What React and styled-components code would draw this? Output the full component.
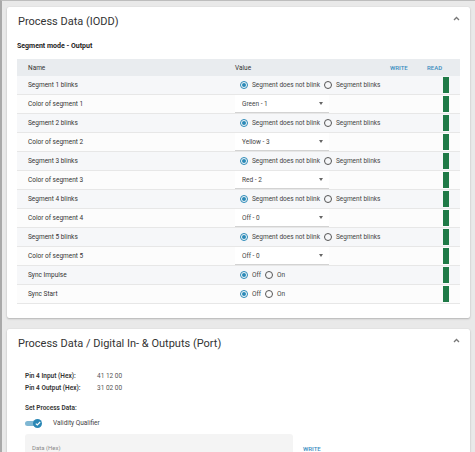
import React from 'react';
import styled, { createGlobalStyle } from 'styled-components';

const GlobalStyle = createGlobalStyle`
  html, body {
    margin: 0;
    padding: 0;
  }
  body {
    background: #e9e9e9;
    font-family: Roboto, "Liberation Sans", sans-serif;
    color: #333;
  }
`;

const Page = styled.div`
  height: 452px;
  overflow: hidden;
  box-sizing: border-box;
  border-left: 2px solid #a9a9a9;
  border-top: 1px solid #bdbdbd;
  padding: 6px 5px 0 5px;
  display: flex;
  flex-direction: column;
  gap: 11px;
`;

const Card = styled.section`
  flex-shrink: 0;
  background: #fff;
  border-radius: 2px;
  box-shadow: 0 1px 2px rgba(0, 0, 0, 0.22), 0 0 1px rgba(0, 0, 0, 0.12);
  padding: 0 10px 14px;
`;

const CardHeader = styled.header`
  height: 28px;
  display: flex;
  align-items: center;
  justify-content: space-between;
  padding-left: 1px;
`;

const Title = styled.h2`
  margin: 0;
  font-size: 11px;
  font-weight: 400;
  color: #333;
`;

const Collapse = styled.svg`
  align-self: flex-start;
  margin-top: 9px;
`;

const SectionTitle = styled.div`
  font-size: 7px;
  font-weight: 700;
  line-height: 10px;
  margin: 6px 0 8px;
  color: #222;
`;

const Row = styled.div`
  display: grid;
  grid-template-columns: 218px minmax(0, 1fr) 37px 41px;
  align-items: center;
  height: ${p => (p.$header ? '17px' : '19px')};
  box-sizing: border-box;
  background: ${p => (p.$header ? '#e9ecef' : p.$shade ? '#f6f7f9' : '#fcfcfc')};
  border-bottom: ${p => (p.$header ? 'none' : '1px solid #e7e7e7')};
  font-size: 6.5px;
  color: #333;
`;

const NameCell = styled.div`
  padding-left: 11px;
  white-space: nowrap;
`;

const ValueCell = styled.div`
  display: flex;
  align-items: center;
  height: 100%;
  white-space: nowrap;
  padding-left: ${p => (p.$pad ? '5px' : '0')};
`;

const ActionHead = styled.div`
  padding-left: 8px;
  font-size: 6px;
  font-weight: 500;
  color: #3a8dbf;
`;

const BarCell = styled.div`
  padding-left: 24px;
  display: flex;
  align-items: center;
`;

const Bar = styled.div`
  width: 6px;
  height: 16px;
  background: #1f7a47;
`;

const RadioLabel = styled.label`
  display: inline-flex;
  align-items: center;
  gap: 4px;
  margin-right: 4px;
  white-space: nowrap;
  color: #444;
`;

const RadioCircle = styled.span`
  flex-shrink: 0;
  width: 8px;
  height: 8px;
  box-sizing: border-box;
  border-radius: 50%;
  border: 1px solid ${p => (p.$on ? '#2a8ab8' : '#555')};
  display: inline-flex;
  align-items: center;
  justify-content: center;
  &::after {
    content: '';
    width: 4px;
    height: 4px;
    border-radius: 50%;
    background: ${p => (p.$on ? '#2a8ab8' : 'transparent')};
  }
`;

const Select = styled.div`
  width: 94px;
  height: 18px;
  box-sizing: border-box;
  display: flex;
  align-items: center;
  justify-content: space-between;
  padding: 0 6px 0 7px;
  background: #fff;
  border-bottom: 1px solid #d3d3d3;
  color: #444;
`;

const Caret = styled.span`
  width: 0;
  height: 0;
  border-left: 2.5px solid transparent;
  border-right: 2.5px solid transparent;
  border-top: 3px solid #666;
`;

const InfoBlock = styled.div`
  padding-left: 8px;
  margin-top: 13px;
  font-size: 6.5px;
`;

const InfoRow = styled.div`
  display: grid;
  grid-template-columns: 72px auto;
  line-height: 12px;
`;

const InfoLabel = styled.span`
  font-weight: 600;
  color: #333;
`;

const InfoValue = styled.span`
  color: #555;
`;

const SubTitle = styled.div`
  margin-top: 8px;
  line-height: 12px;
  font-weight: 600;
  color: #333;
`;

const ToggleRow = styled.div`
  margin-top: 2px;
  height: 14px;
  display: flex;
  align-items: center;
  gap: 11px;
  font-size: 6.5px;
  color: #444;
`;

const Toggle = styled.span`
  position: relative;
  width: 17px;
  height: 9px;
  display: inline-block;
`;

const Track = styled.span`
  position: absolute;
  left: 0;
  top: 2px;
  width: 14px;
  height: 5px;
  border-radius: 3px;
  background: #7fb7d3;
`;

const Thumb = styled.span`
  position: absolute;
  right: 0;
  top: 0;
  width: 9px;
  height: 9px;
  border-radius: 50%;
  background: #2a87b5;
  display: flex;
  align-items: center;
  justify-content: center;
`;

const InputRow = styled.div`
  margin-top: 4px;
  display: flex;
  gap: 10px;
  align-items: flex-start;
`;

const InputBox = styled.div`
  width: 268px;
  height: 30px;
  box-sizing: border-box;
  background: #f4f4f4;
  border-radius: 3px 3px 0 0;
  padding: 10px 7px;
  font-size: 6px;
  color: #8a8a8a;
`;

const WriteLink = styled.span`
  margin-top: 11px;
  font-size: 6px;
  font-weight: 500;
  color: #3a8dbf;
`;

const Chevron = () => (
  <Collapse width="7" height="5" viewBox="0 0 7 5">
    <path d="M1 4 L3.5 1.5 L6 4" fill="none" stroke="#777" strokeWidth="1.3" />
  </Collapse>
);

const Radio = ({ on, children }) => (
  <RadioLabel>
    <RadioCircle $on={on} />
    {children}
  </RadioLabel>
);

const rows = [
  { name: 'Segment 1 blinks', kind: 'blink' },
  { name: 'Color of segment 1', kind: 'select', value: 'Green - 1' },
  { name: 'Segment 2 blinks', kind: 'blink' },
  { name: 'Color of segment 2', kind: 'select', value: 'Yellow - 3' },
  { name: 'Segment 3 blinks', kind: 'blink' },
  { name: 'Color of segment 3', kind: 'select', value: 'Red - 2' },
  { name: 'Segment 4 blinks', kind: 'blink' },
  { name: 'Color of segment 4', kind: 'select', value: 'Off - 0' },
  { name: 'Segment 5 blinks', kind: 'blink' },
  { name: 'Color of segment 5', kind: 'select', value: 'Off - 0' },
  { name: 'Sync Impulse', kind: 'onoff' },
  { name: 'Sync Start', kind: 'onoff' },
];

const renderValue = row => {
  if (row.kind === 'blink') {
    return (
      <ValueCell $pad>
        <Radio on>Segment does not blink</Radio>
        <Radio>Segment blinks</Radio>
      </ValueCell>
    );
  }
  if (row.kind === 'onoff') {
    return (
      <ValueCell $pad>
        <Radio on>Off</Radio>
        <Radio>On</Radio>
      </ValueCell>
    );
  }
  return (
    <ValueCell>
      <Select>
        {row.value}
        <Caret />
      </Select>
    </ValueCell>
  );
};

const App = () => {
  return (
    <Page>
      <GlobalStyle />
      <Card>
        <CardHeader>
          <Title>Process Data (IODD)</Title>
          <Chevron />
        </CardHeader>
        <SectionTitle>Segment mode - Output</SectionTitle>
        <Row $header>
          <NameCell>Name</NameCell>
          <ValueCell>Value</ValueCell>
          <ActionHead>WRITE</ActionHead>
          <ActionHead>READ</ActionHead>
        </Row>
        {rows.map((row, i) => (
          <Row key={row.name} $shade={i % 2 === 0}>
            <NameCell>{row.name}</NameCell>
            {renderValue(row)}
            <div />
            <BarCell>
              <Bar />
            </BarCell>
          </Row>
        ))}
      </Card>
      <Card>
        <CardHeader>
          <Title>Process Data / Digital In- &amp; Outputs (Port)</Title>
          <Chevron />
        </CardHeader>
        <InfoBlock>
          <InfoRow>
            <InfoLabel>Pin 4 Input (Hex):</InfoLabel>
            <InfoValue>41 12 00</InfoValue>
          </InfoRow>
          <InfoRow>
            <InfoLabel>Pin 4 Output (Hex):</InfoLabel>
            <InfoValue>31 02 00</InfoValue>
          </InfoRow>
          <SubTitle>Set Process Data:</SubTitle>
          <ToggleRow>
            <Toggle>
              <Track />
              <Thumb>
                <svg width="6" height="5" viewBox="0 0 6 5">
                  <path d="M0.8 2.6 L2.3 4 L5.2 1" fill="none" stroke="#fff" strokeWidth="1.1" />
                </svg>
              </Thumb>
            </Toggle>
            Validity Qualifier
          </ToggleRow>
          <InputRow>
            <InputBox>Data (Hex)</InputBox>
            <WriteLink>WRITE</WriteLink>
          </InputRow>
        </InfoBlock>
      </Card>
    </Page>
  );
};

export default App;
